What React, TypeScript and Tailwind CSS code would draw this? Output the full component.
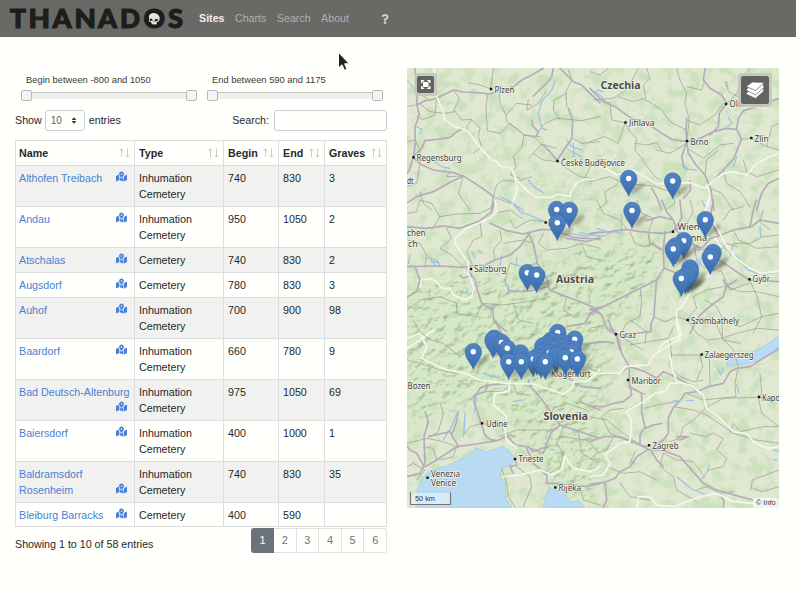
import React from "react";
import { FaMapMarkedAlt, FaQuestion } from "react-icons/fa";

type Site = { name: string; type: string; begin: string; end: string; graves: string };

const IC = "Inhumation Cemetery";
const sites: Site[] = [
  { name: "Althofen Treibach", type: IC, begin: "740", end: "830", graves: "3" },
  { name: "Andau", type: IC, begin: "950", end: "1050", graves: "2" },
  { name: "Atschalas", type: "Cemetery", begin: "740", end: "830", graves: "2" },
  { name: "Augsdorf", type: "Cemetery", begin: "780", end: "830", graves: "3" },
  { name: "Auhof", type: IC, begin: "700", end: "900", graves: "98" },
  { name: "Baardorf", type: IC, begin: "660", end: "780", graves: "9" },
  { name: "Bad Deutsch-Altenburg", type: IC, begin: "975", end: "1050", graves: "69" },
  { name: "Baiersdorf", type: IC, begin: "400", end: "1000", graves: "1" },
  { name: "Baldramsdorf Rosenheim", type: IC, begin: "740", end: "830", graves: "35" },
  { name: "Bleiburg Barracks", type: "Cemetery", begin: "400", end: "590", graves: "" },
];

function Logo() {
  return (
    <svg className="block h-[24px] w-[176px] overflow-visible" viewBox="9 6 176 24" aria-label="THANADOS">
      <g fill="#1d1d1b" stroke="#1d1d1b" strokeWidth="1.1" fontFamily="Lato, sans-serif" fontWeight="900" fontSize="26">
        <text x="10" y="27.2" textLength="16" lengthAdjust="spacingAndGlyphs">T</text>
        <text x="28.500" y="27.2" textLength="21.500" lengthAdjust="spacingAndGlyphs">H</text>
        <text x="52.5" y="27.2" textLength="19" lengthAdjust="spacingAndGlyphs">A</text>
        <text x="74.5" y="27.2" textLength="21.500" lengthAdjust="spacingAndGlyphs">N</text>
        <text x="98" y="27.2" textLength="19" lengthAdjust="spacingAndGlyphs">A</text>
        <text x="120" y="27.2" textLength="20" lengthAdjust="spacingAndGlyphs">D</text>
        <text x="143.5" y="27.2" textLength="21.5" lengthAdjust="spacingAndGlyphs">O</text>
        <text x="168" y="27.2" textLength="15" lengthAdjust="spacingAndGlyphs">S</text>
      </g>
      <circle cx="154.3" cy="17.8" r="8" fill="#1d1d1b" />
      <path d="M149 15c1-3 4-3.300 6-2.700c3 .5 5 3 4.700 5.700l-1 2.500l-1.700.5l-.5 2.500l-4.500-.2l-1-2.300l-2-.6z" fill="#e4e4e0" />
      <path d="M149.500 17.500l2.800.5l.3 1.700l-2.500.2zM154.500 18.500l3-.8l.5 2l-2.800.7zM153 20.500l1-.8l.6 1.200z" fill="#1d1d1b" />
    </svg>
  );
}

function Slider({ label }: { label: string }) {
  return (
    <div>
      <div className="pl-[5px] text-[9.35px] leading-[14px] text-[#3a3a3a]">{label}</div>
      <div className="mt-[3px] flex h-[11px] w-[176px] items-center">
        <span className="h-[11px] w-[11px] shrink-0 rounded-[2px] border border-[#b9b9b9] bg-[#f4f4f2]" />
        <span className="h-[7px] flex-1 border-t border-[#c5c5c3] bg-[#efefed]" />
        <span className="h-[11px] w-[11px] shrink-0 rounded-[2px] border border-[#b9b9b9] bg-[#f4f4f2]" />
      </div>
    </div>
  );
}

function SortIcon() {
  return (
    <svg className="h-[10px] w-[11px] shrink-0" viewBox="0 0 11 10" fill="none" stroke="#cbcbc7" strokeWidth="1">
      <path d="M2.500 9V1M.7 2.800L2.500 .8l1.800 2" />
      <path d="M8.500 .5V9M6.700 7.200l1.800 2l1.800-2" />
    </svg>
  );
}

const columns = ["Name", "Type", "Begin", "End", "Graves"];
const cell = "border border-[#dcdee1] align-top";

function SitesTable() {
  return (
    <table className="w-[371px] table-fixed border-collapse text-[10.7px] leading-[16px] text-[#24282c]">
      <colgroup>
        <col className="w-[119px]" />
        <col className="w-[89px]" />
        <col className="w-[55px]" />
        <col className="w-[46px]" />
        <col className="w-[62px]" />
      </colgroup>
      <thead>
        <tr className="h-[25px]">
          {columns.map((c) => (
            <th key={c} className={cell + " py-[4px] pl-[4px] pr-[4px] text-left font-bold first:pl-[3px]"}>
              <div className="flex items-center justify-between">
                <span>{c}</span>
                <SortIcon />
              </div>
            </th>
          ))}
        </tr>
      </thead>
      <tbody>
        {sites.map((s, i) => (
          <tr key={s.name} className={"last:*:pb-[3px] " + (i % 2 === 0 ? "bg-[#f1f1ef]" : "")}>
            <td className={cell + " py-[4px] pl-[3px] pr-[2px] text-[#4a7fd6]"}>
              <span>{s.name} </span>
              <FaMapMarkedAlt className="float-right mr-[5px] mt-[1px] h-[11px] w-[11px]" />
            </td>
            <td className={cell + " py-[4px] pl-[4px] pr-[20px]"}>{s.type}</td>
            <td className={cell + " py-[4px] pl-[4px]"}>{s.begin}</td>
            <td className={cell + " py-[4px] pl-[4px]"}>{s.end}</td>
            <td className={cell + " py-[4px] pl-[4px]"}>{s.graves}</td>
          </tr>
        ))}
      </tbody>
    </table>
  );
}

/* Each tile is drawn in a 3x grid whose origin is the given map point. */
type Tile = { x: number; y: number; roads: string[]; minor: string[]; borders: string[]; water: string[] };

const tiles: Tile[] = [
  {
    x: 400,
    y: 60,
    roads: [
      "M45 25L48 60L52 100L50 130L58 165L45 200L46 250L40 290L30 325L22 340",
      "M50 135L75 122L100 118L130 105L160 90L190 96L230 98L272 102L300 92L335 85L365 60L390 48L430 25",
      "M400 108L420 88L440 70L455 50L460 25",
      "M480 25L500 45L520 65L545 75L570 100L600 128",
      "M22 428L50 410L100 395L145 370L190 348L160 338L100 330L60 312L40 292",
      "M190 348L225 370L255 390L280 410L275 450",
      "M45 285L65 265L75 242L110 238L150 232L175 212L190 205",
      "M505 145L518 180L516 235L495 265L478 290L470 305",
      "M395 180L400 200L415 215L408 230",
      "M430 255L450 275L470 300",
    ],
    minor: [
      "M205 68L240 75L272 86L280 25", "M160 90L178 115L162 150L185 180L215 178L200 200L205 215",
      "M262 105L258 150L262 212L300 220L330 190L372 225L420 230",
      "M298 95L300 130L318 165L320 185L355 210L372 225L405 232L430 258",
      "M372 225L365 262L340 290L348 320L330 345L360 355", "M385 120L380 150L415 130L440 90",
      "M505 30L515 60L498 95L500 140", "M415 215L435 190L470 175L545 182L600 170",
      "M518 235L545 250L600 245", "M470 300L500 325L540 350L600 362", "M470 305L430 300L400 280L385 295",
      "M58 130L90 155L135 160L165 155", "M22 140L45 135", "M22 245L45 240L60 270L58 310", "M22 380L50 370L60 312",
      "M280 410L290 375L310 360L350 365L395 350", "M150 335L140 350L190 348L175 400L210 450",
      "M400 280L425 252L470 265", "M215 180L240 205L235 230L245 260L220 280", "M318 165L350 130L395 135",
      "M110 118L105 165L70 178L50 170", "M280 410L330 430L360 450", "M480 180L460 150L462 120L500 100",
      "M555 355L570 320L600 310", "M22 60L45 90L80 115", "M60 395L70 430L95 450",
    ],
    borders: ["M100 25L112 55L108 105L128 150L135 180L165 200L200 210L240 262L275 300L290 305L300 318L335 325L350 360L385 395L410 412L455 412L475 402L510 410L515 390L530 370L555 357L600 360", "M345 355L352 385L335 440"],
    water: ["M465 65L455 90L425 125L415 160L425 205L440 210", "M385 360L400 380L430 398", "M500 240L515 260L545 270M505 270L545 290M520 250L522 290", "M300 410L330 425L370 450", "M50 200L65 208L60 220", "M105 305L125 320L150 325"],
  },
  {
    x: 590,
    y: 60,
    roads: [
      "M0 85L20 105L40 125L75 140L100 158L120 172L180 195L215 220L245 238L290 245L320 240L370 215L410 205L440 208L455 238L445 260L432 295L400 330L370 362",
      "M345 25L340 60L360 85L395 105L410 130L388 160L385 200L360 225",
      "M440 208L445 175L460 152L500 140L567 115",
      "M290 175L288 215L290 245L275 290L282 320",
      "M290 245L295 280L318 315L345 345L362 385L372 450",
      "M567 355L535 370L515 400L500 450", "M300 362L302 390L280 415", "M185 385L200 410L215 450",
    ],
    minor: [
      "M260 25L270 60L290 100L285 130L298 180L290 245", "M0 35L30 45L55 25", "M10 120L70 115L110 90L145 25",
      "M85 110L130 125L160 115L215 150L240 185L290 210", "M105 188L120 215L140 235L135 270L155 295L190 345L210 360",
      "M105 188L65 180L60 130L30 120", "M290 80L335 90L345 60", "M290 180L330 195L375 165L400 130",
      "M410 130L440 100L455 60L480 25", "M410 65L415 95L445 110", "M455 238L485 235L530 260L567 270",
      "M300 270L340 295L390 255L430 250", "M345 345L350 300L385 270", "M200 270L240 280L290 250", "M0 245L45 230L85 250L105 190",
      "M135 250L170 255L200 248L215 270", "M0 365L60 350L100 370L190 378L240 395", "M460 300L470 335L500 350L567 330",
      "M400 330L410 370L450 395L480 440", "M362 385L395 400L430 450", "M20 450L50 430L45 395L80 375",
      "M245 395L255 430L225 450", "M170 25L180 55L160 75L168 115", "M530 260L545 200L567 190",
    ],
    borders: ["M0 310L40 320L80 345L125 330L170 352L200 372L245 370L300 368L345 385L372 360L400 340L430 335L470 345L500 310L540 290L567 280", "M350 375L360 405L345 450"],
    water: ["M15 95L35 110L45 125M20 90L40 95", "M275 315L295 328L320 330M280 322L290 330", "M415 170L425 190L412 200", "M405 65L410 80", "M240 345L260 350", "M440 290L430 320"],
  },
  {
    x: 400,
    y: 200,
    roads: [
      "M22 80L80 85L130 78L180 85L240 62L275 35L285 0",
      "M270 70L320 92L370 102L425 88L460 90L520 112L600 118",
      "M388 100L360 140L330 165L285 180L255 195L210 198L190 202L120 198L22 200",
      "M388 105L400 130L412 190L440 235L448 270L500 290L540 305L580 322L600 340",
      "M200 205L225 240L235 280L245 310L278 330L282 365L320 395",
      "M600 112L560 125L500 115", "M600 322L570 340L555 370L500 380", "M22 290L50 275L60 240L45 200",
      "M325 272L370 275L410 270L440 260", "M215 225L190 235L180 225",
    ],
    minor: [
      "M60 0L95 10L120 50L95 90", "M22 120L60 130L80 165L75 200", "M120 50L170 42L240 40L280 20", "M140 85L155 115L120 145L155 165L190 200",
      "M240 65L245 110L220 120L200 155L215 190", "M300 90L305 120L280 150L285 180", "M330 60L345 85L390 60L435 65",
      "M400 130L370 120L310 130", "M412 190L370 200L330 190L315 240L325 272", "M430 100L415 130L440 150L500 145L545 130L600 145",
      "M90 295L120 290L170 310L170 340L230 350L245 310", "M22 330L60 300L90 295", "M245 310L310 315L380 305L450 290",
      "M500 290L490 330L520 350", "M340 310L355 360L400 370", "M22 40L50 35L60 0", "M285 40L330 30L365 55", "M545 130L560 170L600 180",
    ],
    borders: ["M285 0L290 35L270 55L200 85L165 115L165 130L205 190L205 220L222 265L215 290L195 300L160 285L150 265L125 265L110 245L90 235L65 240L60 262", "M22 445L60 420L100 390"],
    water: ["M325 0L345 15L360 35L400 50L435 65", "M85 172L115 185L118 195M92 178L105 195M95 185L115 188", "M305 165L300 200", "M350 172L348 200", "M215 155L225 175M235 150L245 160", "M325 255L327 270", "M200 265L205 285", "M505 100L560 108L600 95M540 98L580 105", "M25 190L30 165"],
  },
  {
    x: 590,
    y: 200,
    roads: [
      "M0 100L60 95L110 88L150 95L185 98L220 100L248 95L275 55L270 0",
      "M215 0L230 35L250 60L262 95L300 130L345 150L380 175L440 215L478 240L567 245",
      "M380 110L430 90L485 80L510 60L567 70", "M385 105L360 60L370 0", "M225 95L220 150L222 205L200 240L150 265L100 290L40 320L0 330",
      "M222 205L250 215L275 235L270 290", "M200 240L195 300L192 350L182 375L183 395L90 405", "M0 325L35 345L50 385L78 405L90 450",
      "M410 255L400 290L365 315L330 345L300 400", "M325 150L340 140L362 115L385 108", "M440 240L410 258L400 240",
      "M175 100L180 130L215 150", "M250 60L210 50L170 62", "M480 80L490 30L500 0",
    ],
    minor: [
      "M140 0L155 40L190 55L175 95", "M20 0L40 40L90 60L110 88", "M120 95L135 130L160 140L190 130L220 150",
      "M300 0L310 35L290 70L255 90", "M310 125L320 180L340 200L395 215L420 270L478 250",
      "M420 170L430 130L480 130L520 110L567 105", "M430 90L445 120L500 145L567 140", "M478 240L500 285L515 350L490 400",
      "M410 260L450 275L500 275L567 290", "M290 360L320 325L310 290L350 270L410 258", "M290 360L260 350L225 365L190 350",
      "M290 360L345 355L380 375L400 420L450 430", "M345 300L380 320L400 360L450 380L515 350", "M0 385L45 375L80 400",
      "M90 405L110 370L150 350L155 300L150 265", "M400 60L420 30L460 20", "M520 30L510 65L540 90", "M80 400L140 440L160 450",
      "M385 160L410 130L440 140", "M515 350L567 340",
    ],
    borders: ["M357 0L350 35L385 90L410 140L440 175L480 205L510 220L567 215", "M375 115L395 140M400 200L360 225L330 240M300 280L275 320L258 330L262 370L275 405L220 430L205 450"],
    water: ["M385 125L410 150L440 168L475 210L510 222L567 218", "M0 105L40 108L70 95L95 100L95 45", "M20 85L50 95", "M510 80L512 110", "M335 0L345 20"],
  },
  {
    x: 400,
    y: 320,
    roads: [
      "M325 190L265 195L255 215L225 225L222 245L238 295L255 345L270 358L290 362L330 345L345 350",
      "M22 470L60 460L75 430L72 350L85 305L75 275",
      "M75 440L110 420L170 380L230 372L290 362", "M85 350L150 335L175 380",
      "M175 275L168 310L155 345", "M325 350L345 375L380 380L430 400L440 370L455 335L480 315",
      "M480 315L540 335L600 355", "M480 315L445 265L415 225L390 200L385 180",
      "M285 0L300 30L320 60L340 90L430 130L500 170L545 200L600 205",
      "M345 415L350 435L330 440L340 460", "M380 385L400 430L440 465L440 490L480 490L560 500L600 490",
      "M385 380L398 395L440 380", "M225 230L240 205L262 195", "M540 245L600 270", "M600 65L560 72L530 80", "M70 435L50 400L30 390L22 380",
    ],
    minor: [
      "M40 0L55 30L90 60L130 70L180 110", "M22 370L80 355L130 365L175 382", "M110 420L100 385L72 380",
      "M190 345L210 320L245 310L230 270", "M245 310L300 320L320 340", "M340 190L350 220L390 225",
      "M305 445L320 490L325 530L345 562", "M350 440L390 470L395 500L370 560", "M440 465L480 440L490 400L470 370L490 320",
      "M450 290L460 265L500 250L560 270", "M90 350L115 335L130 280L120 250", "M170 380L160 410L120 420",
      "M535 335L545 400L580 420L600 415", "M540 500L550 540L600 555", "M480 350L560 360L600 400",
      "M50 480L75 450L40 430L22 440", "M22 120L60 130L120 150L170 160", "M255 215L305 215L340 190", "M300 350L350 330L440 330",
    ],
    borders: ["M22 55L60 40L80 80L65 115L95 130L140 150L190 158L240 180L320 190L400 192L490 222L520 200L520 185L560 185L600 150", "M330 188L325 215L285 220L280 255L305 275L320 290L315 330L320 365L350 380", "M310 470L360 465L420 450L455 465L485 450L495 410L520 445L570 455L600 440"],
    water: ["M195 280L190 350", "M170 280L155 320L130 360", "M195 310L190 350", "M220 225L230 235L222 280", "M450 388L462 390", "M250 160L300 175", "M340 245L365 240", "M85 300L80 320"],
  },
  {
    x: 590,
    y: 320,
    roads: [
      "M55 0L65 25L85 55L95 100L118 140L118 190L125 225L100 245L70 250L40 260L0 258",
      "M0 70L50 65L70 70", "M118 200L155 220L155 280L165 320L150 345L150 375L170 380",
      "M118 140L165 155L200 175L220 155L245 165L300 195L320 215L355 200L400 190L420 155L440 145L480 140L567 85",
      "M320 215L285 220L272 240L250 262L235 295L235 340L220 360L190 380",
      "M0 365L40 350L90 350L130 365L175 388L215 390L270 410L300 445L340 490L380 510L450 530L490 540",
      "M175 388L140 410L120 440L90 455L75 475L45 487L0 492", "M45 487L50 540L40 562",
      "M185 395L200 420L220 440", "M270 360L295 350L260 350", "M165 325L190 315L215 310", "M400 563L402 545L395 530",
    ],
    minor: [
      "M293 0L320 40L350 60L395 55L440 40L500 25L567 30", "M240 60L245 110L235 135L270 170L310 185L340 180",
      "M240 105L330 105L338 140L320 180", "M358 105L360 200", "M395 0L398 55L430 90L445 140L435 190L438 230L340 240L290 220",
      "M510 160L515 220L505 232L400 235L350 262L310 300L280 320L270 355L240 365", "M505 232L567 235", "M505 232L515 280L567 320L520 320L450 335L430 310L420 340",
      "M0 290L50 300L100 340L150 375", "M100 265L60 270L35 290L60 340L130 370", "M165 265L200 255L260 245",
      "M118 140L90 160L40 165L0 145", "M250 260L310 270L350 285L430 340L500 360L567 370", "M340 470L355 450L400 440L410 415L380 390L400 355L370 340L345 350L300 340",
      "M220 400L210 440L250 470L260 510L320 545", "M220 400L260 420L310 425L340 465", "M483 510L487 480L567 450",
      "M50 440L100 460L150 455L200 480", "M120 430L135 395", "M70 350L50 390L20 400L0 420", "M165 70L170 35L120 0",
      "M250 20L235 55L175 65L120 75", "M90 490L120 530L180 540", "M490 505L515 515L567 500", "M320 510L350 500L390 520L430 515",
    ],
    borders: ["M0 160L90 160L105 140L175 135L190 105L215 90L245 70L270 60L260 0", "M265 190L240 190L225 215L195 220L160 245L108 275L125 300L120 365L90 370L45 405L60 430L40 465L0 470", "M240 105L245 140L260 185L300 195L340 225L350 265L385 290L430 335L470 340L490 365L530 385L567 380", "M142 563L145 530L180 530L200 555L250 560L330 530L380 520L430 545L490 550"],
    water: ["M250 242L265 243M290 242L310 241", "M345 262L385 290L430 338", "M358 435L352 455", "M383 145L393 165L400 145", "M155 220L165 222", "M550 418L560 422", "M335 475L345 470", "M260 470L310 510L350 525", "M440 195L448 220", "M130 425L135 430", "M550 390L567 395"],
  },
];

type City = { name: string; x: number; y: number; w: number; dot?: [number, number]; size?: number };
const cities: City[] = [
  { name: "Plzeň", x: 494.5, y: 93, w: 20, dot: [491, 89] },
  { name: "Regensburg", x: 416.5, y: 161, w: 45, dot: [413.500, 157.300] },
  { name: "dt", x: 407, y: 184, w: 6.5 },
  { name: "České Budějovice", x: 561, y: 166, w: 64, dot: [557.500, 161] },
  { name: "Jihlava", x: 629, y: 126, w: 25.500, dot: [625.500, 122.500] },
  { name: "Brno", x: 690.5, y: 144.500, w: 18, dot: [687, 141] },
  { name: "Olomouc", x: 729.5, y: 107, w: 34, dot: [726, 104] },
  { name: "Zlín", x: 754.5, y: 142, w: 14, dot: [751.300, 138] },
  { name: "chen", x: 407, y: 236, w: 18.500, size: 9 },
  { name: "ch", x: 408, y: 247, w: 9.500, size: 9 },
  { name: "Linz", x: 548, y: 226, w: 15, dot: [545.700, 222.500] },
  { name: "Salzburg", x: 474, y: 272, w: 32.500, dot: [471, 269] },
  { name: "Wien", x: 677.5, y: 230, w: 22, dot: [673, 231.700], size: 9.6 },
  { name: "Vienna", x: 678, y: 240.500, w: 29, size: 9.6 },
  { name: "Győr", x: 752.500, y: 282, w: 17.500, dot: [749.500, 279.300] },
  { name: "Szombathely", x: 691, y: 323.500, w: 48, dot: [687.700, 320] },
  { name: "Graz", x: 619.500, y: 337.500, w: 16.500, dot: [616, 334.300] },
  { name: "Zalaegerszeg", x: 704.500, y: 358, w: 49, dot: [701.700, 354.500] },
  { name: "Maribor", x: 631.500, y: 383.500, w: 29.500, dot: [628, 380] },
  { name: "Kapo", x: 762, y: 401, w: 18, dot: [759, 397] },
  { name: "Zagreb", x: 652.500, y: 448.500, w: 26, dot: [649, 445.300] },
  { name: "Bozen", x: 407.500, y: 388.500, w: 23 },
  { name: "Klagenfurt", x: 551, y: 377, w: 39.500 },
  { name: "Udine", x: 486, y: 426.500, w: 21.500, dot: [482, 423.300] },
  { name: "Trieste", x: 518.500, y: 462, w: 25, dot: [515, 459] },
  { name: "Venezia", x: 431, y: 476.500, w: 29 },
  { name: "Venice", x: 431, y: 485.500, w: 25, dot: [427.500, 477.700] },
  { name: "Rijeka", x: 558.500, y: 491, w: 22.500, dot: [555.300, 487.500] },
];

const countries = [
  { name: "Czechia", x: 600.5, y: 88.500, w: 40 },
  { name: "Austria", x: 556, y: 282.500, w: 38 },
  { name: "Slovenia", x: 543.5, y: 420, w: 44.500 },
];

/* Marker positions, given at the centre of the white dot, back to front. */
const pins: [number, number][] = [
  [628.7, 178.500], [672.7, 181], [556.7, 209.500], [569.300, 210.300], [632, 210.500], [705.300, 219.700], [557.300, 222.700],
  [683.700, 240.700], [675.500, 246], [673.300, 249], [713, 252.500], [710.300, 257],
  [690, 268], [690.500, 272], [688, 274.500], [685.500, 276], [681.300, 278.500], [527.300, 272.700], [536.700, 275],
  [557.700, 332.500], [494.300, 338.300], [493, 340], [574.700, 339.300], [551, 340.500], [555, 341.500], [562, 342], [501.500, 342.500],
  [547, 344], [543, 346], [559, 346], [550, 347.500], [563.500, 347.500], [554, 349], [507.300, 348.300], [573, 349], [546, 351],
  [566, 351], [520.500, 353], [541, 353], [571.500, 352], [473.300, 351.700], [549.300, 352.700], [537, 357], [556, 355],
  [565.300, 357.700], [533.300, 359], [577.300, 359], [541, 360.500], [508.700, 361.700], [521.300, 361.700], [545.300, 361.700],
];
const hiddenDots = new Set([8, 10, 12, 13, 14, 15, 21, 23, 24, 25, 27, 28, 29, 30, 31, 32, 34, 35, 37, 38, 42, 43, 47]);

function MapView() {
  return (
    <svg className="block h-[440px] w-[372px]" viewBox="407 68 372 440">
      <defs>
        <filter id="woods" x="0" y="0" width="100%" height="100%" colorInterpolationFilters="sRGB">
          <feTurbulence type="fractalNoise" baseFrequency="0.08" numOctaves="4" seed="8" />
          <feColorMatrix values="0 0 0 0 0.77  0 0 0 0 0.875  0 0 0 0 0.715  5 0 0 0 -2.35" />
          <feComposite in2="SourceGraphic" operator="in" />
        </filter>
        <filter id="relief" x="0" y="0" width="100%" height="100%" colorInterpolationFilters="sRGB">
          <feTurbulence type="fractalNoise" baseFrequency="0.1 0.13" numOctaves="3" seed="21" result="n" />
          <feColorMatrix in="n" values="0 0 0 0 0  0 0 0 0 0  0 0 0 0 0  1 0 0 0 0" />
          <feDiffuseLighting surfaceScale="2.4" diffuseConstant="1.3" lightingColor="#f8fff2">
            <feDistantLight azimuth="225" elevation="52" />
          </feDiffuseLighting>
          <feComposite in2="SourceGraphic" operator="in" />
        </filter>
        <filter id="soft" x="-10%" y="-10%" width="120%" height="120%">
          <feGaussianBlur stdDeviation="9" />
        </filter>
        <filter id="shade" x="-50%" y="-50%" width="200%" height="200%">
          <feGaussianBlur stdDeviation="1.5" />
        </filter>
        <mask id="alps" maskUnits="userSpaceOnUse" x="407" y="68" width="372" height="440">
          <path d="M400 278L440 276L470 281L510 272L540 262L570 252L610 244L655 240L668 256L650 290L625 315L605 335L614 380L595 405L610 450L590 508L560 508L530 450L490 400L450 408L415 425L400 420z" fill="#fff" filter="url(#soft)" />
          <path d="M428 80L450 130L520 170L545 205L650 215L600 180L560 185L520 165L470 130z" fill="#888" filter="url(#soft)" />
        </mask>
        <linearGradient id="pinFill" x1="0" y1="0" x2="0" y2="1">
          <stop offset="0" stopColor="#5385c5" />
          <stop offset="1" stopColor="#386bae" />
        </linearGradient>
        <g id="pin">
          <path d="M0 17.500L5 8L14 4L16 7L10 13z" fill="#3d4638" opacity="0.34" filter="url(#shade)" />
          <path d="M0 17.800C-1.500 12.500-8.300 6.500-8.300 0A8.300 8.300 0 0 1 8.300 0C8.300 6.500 1.500 12.500 0 17.800z" fill="url(#pinFill)" stroke="#3a6bab" strokeWidth="0.6" />
        </g>
      </defs>
      <rect x="407" y="68" width="372" height="440" fill="#e1e8d1" />
      <rect x="407" y="68" width="372" height="440" filter="url(#woods)" opacity="0.7" />
      <g mask="url(#alps)">
        <rect x="407" y="68" width="372" height="440" fill="#cfe5bf" opacity="0.75" />
        <g className="mix-blend-multiply" opacity="0.4">
          <rect x="407" y="68" width="372" height="440" fill="#fff" filter="url(#relief)" />
        </g>
      </g>
      <g fill="#b8daf3" stroke="#9fc5e4" strokeWidth="0.6">
        <path d="M418 508L417 492L421 480L430 470L446 466L464 458L475 451L474 447L485 452L495 449L503 446L509 451L515 459L511 465L502 468L500 477L505 483L506 499L512 508z" />
        <path d="M543 508L546 496L549 487L556 491L563 491L570 503L578 500L585 508z" />
        <path d="M780 335L763 347L745 356L727 361L727 366L740 365L758 361L780 350z" />
        <path d="M696 260L701 257L700 266L695 269z" />
      </g>
      {tiles.map((t) => (
        <g key={t.x + "-" + t.y} transform={`translate(${t.x} ${t.y}) scale(0.33333)`} fill="none" strokeLinejoin="round" strokeLinecap="round">
          <path d={t.minor.join("")} stroke="#92978c" strokeWidth="1.900" />
          <path d={t.water.join("")} stroke="#9cc5e6" strokeWidth="4" />
          <path d={t.roads.join("")} stroke="#b6abbb" strokeWidth="5" />
          <path d={t.borders.join("")} stroke="#f5f7ec" strokeWidth="5" />
        </g>
      ))}
      <g fontFamily="'Noto Sans', 'Open Sans', sans-serif" fill="#3e3e3c" stroke="#f1f3e6" strokeWidth="1.500" strokeLinejoin="round" style={{ paintOrder: "stroke" }}>
        {cities.map((c) => (
          <g key={c.name}>
            {c.dot && <rect x={c.dot[0] - 1.2} y={c.dot[1] - 1.2} width="2.400" height="2.400" fill="#111" stroke="none" />}
            <text x={c.x} y={c.y} fontSize={c.size ?? 8.2} textLength={c.w} lengthAdjust="spacingAndGlyphs">{c.name}</text>
          </g>
        ))}
        {countries.map((c) => (
          <text key={c.name} x={c.x} y={c.y} fontSize="10.500" fontWeight="700" fill="#4b4b4b" textLength={c.w} lengthAdjust="spacingAndGlyphs">{c.name}</text>
        ))}
      </g>
      {pins.map(([x, y], i) => (
        <g key={i} transform={`translate(${x} ${y})`}>
          <use href="#pin" />
          {!hiddenDots.has(i) && <circle r="2.700" fill="#fff" />}
        </g>
      ))}

      <rect x="414.500" y="73" width="23" height="23" rx="3" fill="#c3c5bd" opacity="0.9" />
      <rect x="417" y="76" width="17" height="17" rx="2" fill="#62625f" />
      <g fill="#fff">
        <rect x="423" y="82" width="5.500" height="5" />
        <path d="M421 80h3.800l-3.800 3.500zM430.500 80h-3.800l3.800 3.500zM421 89h3.800l-3.800-3.500zM430.500 89h-3.800l3.800-3.500z" />
      </g>
      <rect x="738" y="73" width="34" height="34" rx="3" fill="#c3c5bd" opacity="0.9" />
      <rect x="741" y="76" width="28" height="28" rx="2.500" fill="#62625f" />
      <g fill="#fff" stroke="#62625f" strokeWidth="0.700">
        <path d="M746 94L749 90.500L755 93L762.500 87L764 91L755.500 98.500z" />
        <path d="M746 90L749 87L755 89.500L763 83.500L764 87.500L755.500 95z" />
        <path d="M746 86.500L752.500 82L764.500 82.500L755.500 90.500z" />
      </g>

      <rect x="410.500" y="493" width="40" height="11.500" fill="#fff" opacity="0.45" />
      <path d="M410.500 492.500V504.500H450.500V492.500" fill="none" stroke="#777" strokeWidth="1.200" />
      <text x="415" y="501" fontFamily="'Liberation Sans', sans-serif" fontSize="7.500" fill="#333" textLength="20" lengthAdjust="spacingAndGlyphs">50 km</text>
      <rect x="753" y="498" width="26" height="10" fill="#fff" opacity="0.65" />
      <text x="756" y="505" fontFamily="'Liberation Sans', sans-serif" fontSize="7" fill="#333" textLength="19.500" lengthAdjust="spacingAndGlyphs">© Info</text>
    </svg>
  );
}

export default function App() {
  return (
    <div className="relative h-[598px] w-[796px] overflow-hidden bg-[#fffffc] font-['Liberation_Sans',Arial,sans-serif] text-[10.7px] text-[#24282c]">
      <header className="flex h-[37px] items-center bg-[#696966] pl-[9px] text-[#b0b0ae]">
        <Logo />
        <nav className="ml-[14px] flex gap-[10.4px]">
          <span className="font-bold text-[#efefed]">Sites</span>
          <span>Charts</span>
          <span>Search</span>
          <span>About</span>
        </nav>
        <FaQuestion className="ml-[31px] h-[10px] w-[10px] text-[#cdcdcb]" />
      </header>

      <main className="flex">
        <section className="ml-[15px] w-[372px] pt-[36px]">
          <div className="flex gap-[10px] pl-[6px]">
            <Slider label="Begin between -800 and 1050" />
            <Slider label="End between 590 and 1175" />
          </div>

          <div className="mt-[8px] flex h-[22px] items-center justify-between">
            <div className="flex items-center">
              Show
              <span className="ml-[3px] mr-[4px] flex h-[21px] w-[40px] items-center justify-between rounded-[3px] border border-[#c9ced6] pl-[5px] pr-[7px] text-[10px] text-[#5a6068]">
                10
                <svg className="h-[7px] w-[6px]" viewBox="0 0 6 7" fill="#343a40">
                  <path d="M3 .3L5.500 3H.5zM3 6.700L.5 4h5z" />
                </svg>
              </span>
              entries
            </div>
            <div className="flex items-center">
              Search:
              <span className="ml-[5px] h-[21px] w-[113px] rounded-[3px] border border-[#c9ced6]" />
            </div>
          </div>

          <div className="mt-[9px]">
            <SitesTable />
          </div>

          <div className="mt-[1px] flex justify-between">
            <div className="pt-[8px] leading-[16px]">Showing 1 to 10 of 58 entries</div>
            <div className="flex h-[25px] text-[11px] text-[#6c757d]">
              <span className="flex w-[23px] items-center justify-center rounded-l-[3px] bg-[#6c727a] text-white">1</span>
              {["2", "3", "4", "5"].map((n) => (
                <span key={n} className="flex w-[22.6px] items-center justify-center border-y border-r border-[#dee0e3]">{n}</span>
              ))}
              <span className="flex w-[22.6px] items-center justify-center rounded-r-[3px] border-y border-r border-[#dee0e3]">6</span>
            </div>
          </div>
        </section>

        <section className="ml-[20px] mt-[31px]">
          <MapView />
        </section>
      </main>

      <svg className="absolute left-[337px] top-[51px] h-[21px] w-[14px]" viewBox="0 0 14 21">
        <path d="M1.500 1.500V17L5 13.800L7.500 19.300L10 18.200L7.600 12.800H12.300z" fill="#222" stroke="#fff" strokeWidth="1" />
      </svg>
    </div>
  );
}
